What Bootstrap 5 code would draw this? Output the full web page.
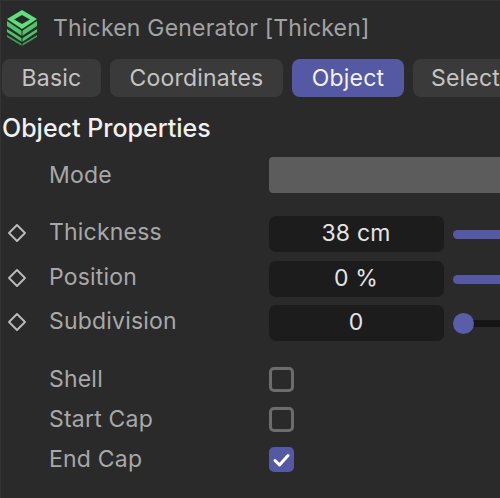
<!DOCTYPE html>
<html lang="en">
<head>
  <meta charset="UTF-8">
  <title>Thicken Generator</title>
  <link href="https://cdn.jsdelivr.net/npm/bootstrap@5.3.0/dist/css/bootstrap.min.css" rel="stylesheet">
  <style>
    body { background: #2a2a2a; color: #a8a8a8; font-family: Inter, "Liberation Sans", sans-serif; font-size: 23px; line-height: 1; letter-spacing: .2px; overflow: hidden; }
    .panel { width: 500px; height: 498px; overflow: hidden; border-left: 1px solid #343434; border-top: 1px solid #343434; }
    .title-row { height: 58px; padding: 0 0 4px 5px; gap: 15px; }
    .title-text { color: #a3a3a3; white-space: nowrap; }
    .tabs { gap: 9px; padding-left: 1px; height: 38px; }
    .tab-item { height: 38px; background: #3a3a3a; color: #c4c4c4; border-radius: 8px; flex: none; }
    .tab-item.on { background: #5558a2; color: #f2f2f2; }
    .tab-basic { width: 99px; }
    .tab-coords { width: 173px; }
    .tab-object { width: 112px; }
    .tab-select { width: 120px; justify-content: flex-start !important; padding-left: 18px; }
    .section-title { color: #f0f0f0; font-size: 25px; font-weight: 500; letter-spacing: 0; margin: 19px 0 0 1px; height: 24px; }
    .prop { display: grid; grid-template-columns: 48px 220px 260px; align-items: center; }
    .prop-mode { height: 36px; margin-top: 17px; }
    .prop-num { height: 36px; margin-top: 9px; }
    .prop-num > span { padding-bottom: 3px; }
    .prop-first { margin-top: 23px; }
    .prop-last { margin-top: 8px; }
    .prop-check { height: 25px; margin-top: 15px; }
    .prop-check.first { margin-top: 26px; }
    .key-icon { padding-left: 6px; display: flex; }
    .mode-field { height: 36px; background: #5c5c5c; border-radius: 4px; }
    .num-wrap { display: flex; align-items: center; gap: 9px; }
    .num-field { width: 175px; height: 36px; flex: none; background: #1c1c1c; color: #e4e4e4; border-radius: 7px; padding: 0 1px 2px 0; }
    .slide-bar { flex: 1; height: 9px; background: #5558a2; border-radius: 5px 0 0 5px; }
    .slide-empty { flex: 1; height: 7px; background: #161616; position: relative; margin-left: 10px; }
    .slide-knob { position: absolute; left: -10px; top: -7px; width: 21px; height: 21px; border-radius: 50%; background: #5a5ea8; }
    .check-box { width: 25px; height: 25px; border: 3px solid #6c6c6c; border-radius: 5px; }
    .check-box.on { background: #5558a2; border-color: #5558a2; }
  </style>
</head>
<body>
  <div class="panel">
    <div class="title-row d-flex align-items-center">
      <svg width="32" height="36" viewBox="0 0 32 36">
        <path d="M16 0 31 9 16 19 1 9Z" fill="#5fe07c"/>
        <path d="M16 5 24 9.500 16 14 8 9.500Z" fill="#232a25"/>
        <path d="M1 11V16L16 26 31 16V11L16 21Z" fill="#4cc568"/>
        <path d="M1 19V22L16 32 31 22V19L16 28.500Z" fill="#4cc568"/>
        <path d="M1 25V27L16 36 31 27V25L16 34Z" fill="#3f9d54"/>
        <path d="M16 20V36" stroke="#2a2a2a" stroke-width="1"/>
      </svg>
      <span class="title-text">Thicken Generator [Thicken]</span>
    </div>

    <div class="tabs d-flex">
      <div class="tab-item tab-basic d-flex align-items-center justify-content-center">Basic</div>
      <div class="tab-item tab-coords d-flex align-items-center justify-content-center">Coordinates</div>
      <div class="tab-item tab-object on d-flex align-items-center justify-content-center">Object</div>
      <div class="tab-item tab-select d-flex align-items-center justify-content-center">Select</div>
    </div>

    <div class="section-title">Object Properties</div>

    <div class="prop prop-mode">
      <span></span>
      <span>Mode</span>
      <div class="mode-field"></div>
    </div>

    <div class="prop prop-num prop-first">
      <span class="key-icon"><svg width="20" height="20" viewBox="0 0 20 20"><path d="M10 2 18 10 10 18 2 10Z" fill="none" stroke="#bdbdbd" stroke-width="1.800" stroke-linejoin="round"/></svg></span>
      <span>Thickness</span>
      <div class="num-wrap">
        <div class="num-field d-flex align-items-center justify-content-center">38 cm</div>
        <div class="slide-bar"></div>
      </div>
    </div>
    <div class="prop prop-num">
      <span class="key-icon"><svg width="20" height="20" viewBox="0 0 20 20"><path d="M10 2 18 10 10 18 2 10Z" fill="none" stroke="#bdbdbd" stroke-width="1.800" stroke-linejoin="round"/></svg></span>
      <span>Position</span>
      <div class="num-wrap">
        <div class="num-field d-flex align-items-center justify-content-center">0 %</div>
        <div class="slide-bar"></div>
      </div>
    </div>
    <div class="prop prop-num prop-last">
      <span class="key-icon"><svg width="20" height="20" viewBox="0 0 20 20"><path d="M10 2 18 10 10 18 2 10Z" fill="none" stroke="#bdbdbd" stroke-width="1.800" stroke-linejoin="round"/></svg></span>
      <span>Subdivision</span>
      <div class="num-wrap">
        <div class="num-field d-flex align-items-center justify-content-center">0</div>
        <div class="slide-empty"><div class="slide-knob"></div></div>
      </div>
    </div>

    <div class="prop prop-check first">
      <span></span>
      <span>Shell</span>
      <div class="check-box"></div>
    </div>
    <div class="prop prop-check">
      <span></span>
      <span>Start Cap</span>
      <div class="check-box"></div>
    </div>
    <div class="prop prop-check">
      <span></span>
      <span>End Cap</span>
      <div class="check-box on d-flex align-items-center justify-content-center">
        <svg width="17" height="14" viewBox="0 0 17 14"><path d="M2 7.500 6.500 12 15 2.500" fill="none" stroke="#fff" stroke-width="3" stroke-linecap="round" stroke-linejoin="round"/></svg>
      </div>
    </div>
  </div>
  <script src="https://cdn.jsdelivr.net/npm/bootstrap@5.3.0/dist/js/bootstrap.bundle.min.js"></script>
</body>
</html>
